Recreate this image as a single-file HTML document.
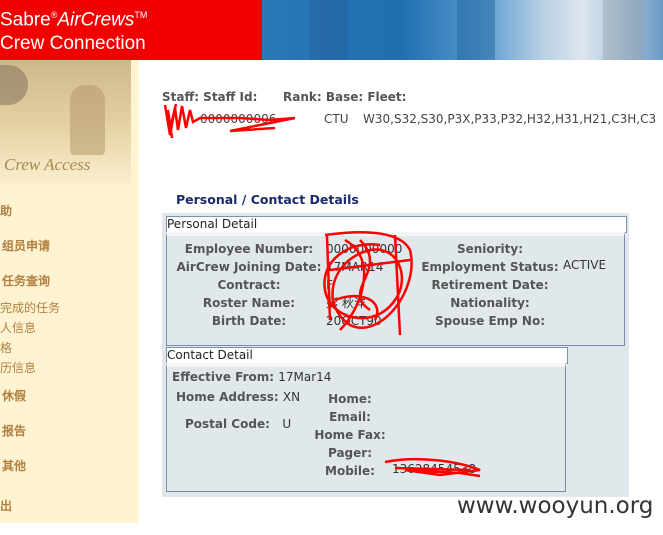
<!DOCTYPE html>
<html><head><meta charset="utf-8"><style>
body{margin:0;width:663px;height:535px;position:relative;overflow:hidden;background:#fff;font-family:"DejaVu Sans","Noto Sans CJK SC",sans-serif}
.a{position:absolute;white-space:nowrap}
.l{font-weight:bold;color:#555;font-size:12px}
.v{color:#333;font-size:12px;font-weight:normal}
.c{text-align:center}
.nav{font-weight:bold;color:#b08040;font-size:12px;font-family:"Liberation Sans","WenQuanYi Zen Hei",sans-serif}
.sub{color:#b08040;font-size:12px;font-family:"Liberation Sans","WenQuanYi Zen Hei",sans-serif}
</style></head><body>
<div class="a" style="left:0;top:0;width:262px;height:60px;background:#f20000"></div>
<div class="a" style="left:0;top:3px;color:#fff;font:19px 'Liberation Sans',sans-serif;line-height:24px">Sabre<sup style="font-size:9px">®</sup><i>AirCrews</i><sup style="font-size:9px">TM</sup><br>Crew Connection</div>
<div class="a" style="left:262px;top:0;width:401px;height:60px;background:linear-gradient(90deg,#2a78b8 0%,#1f6fb0 35%,#5a9ad0 55%,#b8d0e4 70%,#dde6ee 80%,#9ab8d2 92%,#6a9cc8 100%)"></div>
<div class="a" style="left:310px;top:0;width:38px;height:60px;background:rgba(40,90,150,.35)"></div>
<div class="a" style="left:457px;top:0;width:38px;height:60px;background:rgba(20,90,150,.4)"></div>
<div class="a" style="left:603px;top:0;width:40px;height:60px;background:rgba(150,160,170,.4)"></div>
<div class="a" style="left:0;top:60px;width:139px;height:463px;background:#fff3d2"></div>
<div class="a" style="left:0;top:60px;width:131px;height:125px;background:linear-gradient(180deg,#cdb88c 0%,#e3d0a2 50%,#fbefcf 100%)"></div>
<div class="a" style="left:70px;top:85px;width:35px;height:70px;background:#b09468;border-radius:15px 15px 4px 4px;opacity:.5"></div>
<div class="a" style="left:0;top:65px;width:28px;height:40px;background:#7a6a58;border-radius:0 20px 20px 0;opacity:.5"></div>
<div class="a" style="left:4px;top:155px;color:#a88850;font:italic 17px 'Liberation Serif',serif">Crew Access</div>
<div class="a nav" style="left:0;top:202px">助</div>
<div class="a nav" style="left:2px;top:237px">组员申请</div>
<div class="a nav" style="left:2px;top:272px">任务查询</div>
<div class="a sub" style="left:0;top:299px">完成的任务</div>
<div class="a sub" style="left:0;top:319px">人信息</div>
<div class="a sub" style="left:0;top:339px">格</div>
<div class="a sub" style="left:0;top:359px">历信息</div>
<div class="a nav" style="left:2px;top:387px">休假</div>
<div class="a nav" style="left:2px;top:422px">报告</div>
<div class="a nav" style="left:2px;top:457px">其他</div>
<div class="a nav" style="left:0;top:497px">出</div>

<div class="a l" style="left:162px;top:90px">Staff: Staff Id:</div>
<div class="a l" style="left:283px;top:90px">Rank: Base: Fleet:</div>
<div class="a v" style="left:200px;top:112px;color:#444">0000000006</div>
<div class="a v" style="left:324px;top:112px;color:#444">CTU</div>
<div class="a v" style="left:363px;top:112px;color:#444">W30,S32,S30,P3X,P33,P32,H32,H31,H21,C3H,C3</div>
<div class="a" style="left:176px;top:192px;color:#1a2a6a;font-weight:bold;font-size:12.5px">Personal / Contact Details</div>

<div class="a" style="left:162px;top:213px;width:467px;height:284px;background:#e1e8ec"></div>
<div class="a" style="left:166px;top:216px;width:459px;height:15px;background:#fff;border:1px solid #8090b0;font-size:12px;line-height:15px;color:#222">Personal Detail</div>
<div class="a" style="left:166px;top:232px;width:457px;height:109px;border:1px solid #7a8aa8;border-top:4px solid #f4f6f8"></div>
<div class="a l c" style="left:169px;width:160px;top:240px;line-height:18px">Employee Number:<br>AirCrew Joining Date:<br>Contract:<br>Roster Name:<br>Birth Date:</div>
<div class="a v" style="left:326px;top:240px;line-height:18px">0000000000<br>17MAR14<br>F<br>彭 秋洋<br>20OCT90</div>
<div class="a l c" style="left:410px;width:160px;top:240px;line-height:18px">Seniority:<br>Employment Status:<br>Retirement Date:<br>Nationality:<br>Spouse Emp No:</div>
<div class="a v" style="left:563px;top:258px">ACTIVE</div>

<div class="a" style="left:166px;top:347px;width:400px;height:15px;background:#fff;border:1px solid #8090b0;font-size:12px;line-height:15px;color:#222">Contact Detail</div>
<div class="a" style="left:166px;top:363px;width:398px;height:124px;border:1px solid #7a8aa8;border-top:4px solid #f4f6f8"></div>
<div class="a l" style="left:172px;top:370px">Effective From: <span class="v">17Mar14</span></div>
<div class="a l" style="left:176px;top:390px">Home Address: <span class="v">XN</span></div>
<div class="a l" style="left:185px;top:417px">Postal Code: &nbsp;&nbsp;<span class="v">U</span></div>
<div class="a l c" style="left:300px;width:100px;top:390px;line-height:18px">Home:<br>Email:<br>Home Fax:<br>Pager:<br>Mobile:</div>
<div class="a v" style="left:392px;top:462px">13628454538</div>

<svg class="a" style="left:0;top:0" width="663" height="535">
<g fill="none" stroke="#f00" stroke-width="2.5">
<path d="M165 105 L170 135 L175 108 L178 130 L182 106 L186 128 L190 110 L193 122 L200 118 L240 118 L270 120 L295 118 L260 125 L230 131 L275 128"/>
<path d="M168 110 L172 138 M176 104 L171 125"/>
<path d="M325 235 C360 230 400 230 410 250 C420 290 380 340 350 325 C320 305 330 260 370 250 C400 245 410 280 395 300 C375 330 330 320 325 290 C320 260 350 240 380 245 M395 235 L400 335 M330 270 L410 260 M335 300 C360 290 385 300 375 320"/>
<path d="M327 236 L330 320 M345 240 C380 260 360 310 340 330 M360 240 C390 270 340 290 370 310"/>
<path d="M385 462 C420 455 460 462 480 470 L440 475 L405 470 L460 473 L480 476 M395 468 L470 470"/>
</g></svg>
<div class="a" style="left:457px;top:493px;font:23px 'DejaVu Sans',sans-serif;color:#333">www.wooyun.org</div>
</body></html>
